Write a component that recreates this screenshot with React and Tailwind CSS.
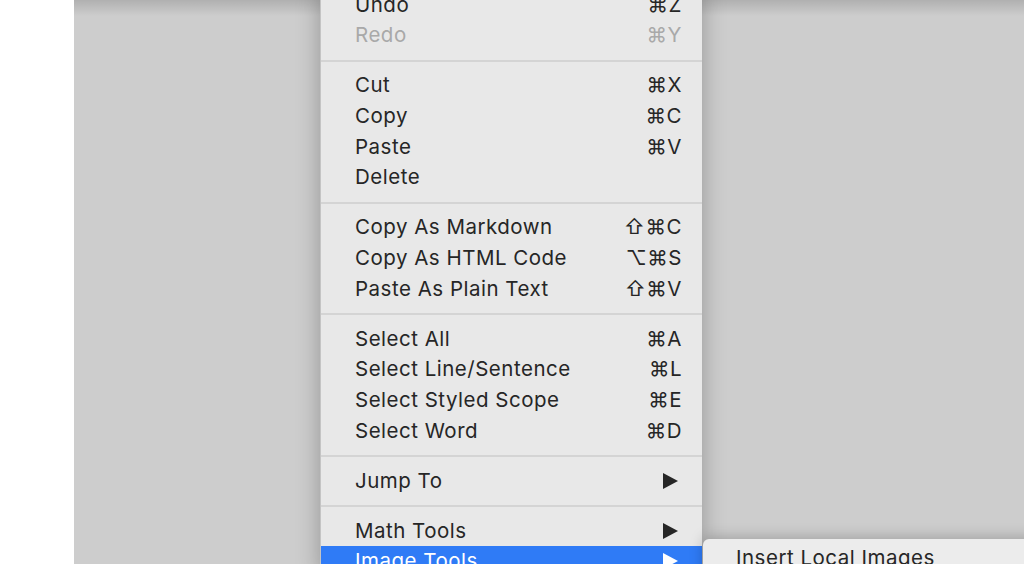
import React from "react";

const groups = [
  [
    { l: "Undo", k: "⌘Z" },
    { l: "Redo", k: "⌘Y", d: true },
  ],
  [
    { l: "Cut", k: "⌘X" },
    { l: "Copy", k: "⌘C" },
    { l: "Paste", k: "⌘V" },
    { l: "Delete" },
  ],
  [
    { l: "Copy As Markdown", k: "⇧⌘C" },
    { l: "Copy As HTML Code", k: "⌥⌘S" },
    { l: "Paste As Plain Text", k: "⇧⌘V" },
  ],
  [
    { l: "Select All", k: "⌘A" },
    { l: "Select Line/Sentence", k: "⌘L" },
    { l: "Select Styled Scope", k: "⌘E" },
    { l: "Select Word", k: "⌘D" },
  ],
  [{ l: "Jump To", sub: true }],
  [
    { l: "Math Tools", sub: true },
    { l: "Image Tools", sub: true, hi: true },
  ],
];

function Arrow({ white }) {
  return (
    <svg width="15" height="16" viewBox="0 0 15 16" className="block">
      <path d="M0 0 L15 8 L0 16 Z" fill={white ? "#ffffff" : "#262626"} />
    </svg>
  );
}

function Item({ it }) {
  const color = it.hi ? "text-white" : it.d ? "text-[#a9a9a9]" : "text-[#262626]";
  return (
    <div
      className={`h-[30.67px] flex items-center justify-between pl-[34px] ${
        it.sub ? "pr-[24px]" : "pr-[20px]"
      } ${it.hi ? "bg-[#2f7bf6]" : ""} ${color}`}
    >
      <span className="tracking-[0.5px]">{it.l}</span>
      {it.k && <span className="tracking-[0.5px]">{it.k}</span>}
      {it.sub && <Arrow white={it.hi} />}
    </div>
  );
}

export default function App() {
  return (
    <div className="w-[1024px] h-[564px] overflow-hidden flex font-['Inter','DejaVu_Sans',sans-serif] text-[20.5px] leading-none">
      <div className="w-[74px] bg-white shrink-0" />
      <div className="relative flex-1 bg-[#cdcdcd] overflow-hidden">
        <div className="absolute left-0 right-0 top-0 h-[16px] bg-gradient-to-b from-[rgba(0,0,0,0.14)] to-transparent" />
        <div className="absolute left-[246px] top-[-10.33px] w-[382px] bg-[#e8e8e8] shadow-[0_0_22px_rgba(0,0,0,0.28)] border-l border-[#c4c4c4] flex flex-col">
          {groups.map((g, gi) => (
            <div key={gi} className="flex flex-col">
              {gi > 0 && (
                <div className="h-[19.33px] flex items-center">
                  <div className="w-full h-[2px] bg-[#d4d4d4]" />
                </div>
              )}
              {g.map((it) => (
                <Item key={it.l} it={it} />
              ))}
            </div>
          ))}
        </div>
        <div className="absolute left-[629px] top-[539px] w-[360px] h-[60px] bg-[#ececec] rounded-tl-[6px] shadow-[0_-2px_14px_rgba(0,0,0,0.22)] pl-[33px] pt-[9px] text-[#262626] tracking-[0.5px]">
          Insert Local Images
        </div>
      </div>
    </div>
  );
}
